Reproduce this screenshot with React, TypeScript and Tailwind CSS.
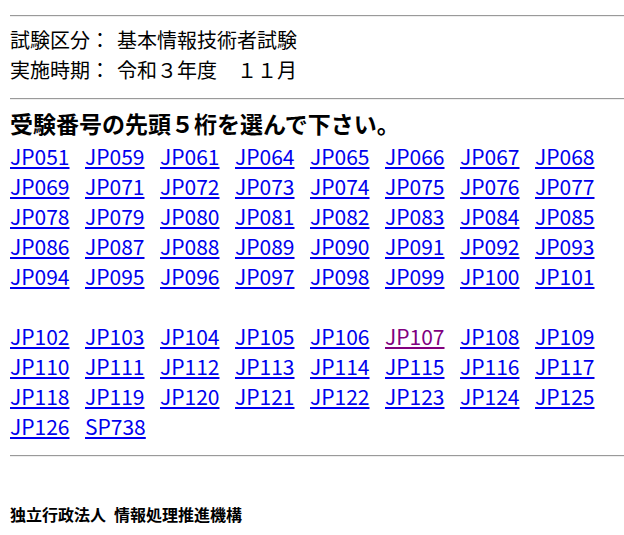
import React from "react";

const rows1 = [
  ["JP051", "JP059", "JP061", "JP064", "JP065", "JP066", "JP067", "JP068"],
  ["JP069", "JP071", "JP072", "JP073", "JP074", "JP075", "JP076", "JP077"],
  ["JP078", "JP079", "JP080", "JP081", "JP082", "JP083", "JP084", "JP085"],
  ["JP086", "JP087", "JP088", "JP089", "JP090", "JP091", "JP092", "JP093"],
  ["JP094", "JP095", "JP096", "JP097", "JP098", "JP099", "JP100", "JP101"],
];
const rows2 = [
  ["JP102", "JP103", "JP104", "JP105", "JP106", "JP107", "JP108", "JP109"],
  ["JP110", "JP111", "JP112", "JP113", "JP114", "JP115", "JP116", "JP117"],
  ["JP118", "JP119", "JP120", "JP121", "JP122", "JP123", "JP124", "JP125"],
  ["JP126", "SP738"],
];

function LinkRow({ items }: { items: string[] }) {
  return (
    <div className="flex h-[30px] items-center text-[21px]">
      {items.map((c) => (
        <div key={c} className="w-[75px] shrink-0">
          <a
            href="#"
            className={
              "underline underline-offset-[2px] " +
              (c === "JP107" ? "text-[#800080]" : "text-[#0000ee]")
            }
          >
            {c}
          </a>
        </div>
      ))}
    </div>
  );
}

function Hr() {
  return <div className="h-[2px] border-t border-t-[#9a9a9a] border-b border-b-[#eeeeee]" />;
}

export default function App() {
  return (
    <div
      className="bg-white w-[624px] h-[535px] overflow-hidden pl-[10px] pt-[15px] text-black text-[20px] leading-[30px]"
      style={{ fontFamily: '"Noto Sans CJK JP", "Liberation Sans", sans-serif' }}
    >
      <Hr />
      <div className="mt-[8px]">
        <div>
          試験区分：<span className="ml-[7px]">基本情報技術者試験</span>
        </div>
        <div>
          実施時期：<span className="ml-[7px]">令和３年度　１１月</span>
        </div>
      </div>
      <div className="mt-[13px]">
        <Hr />
      </div>
      <div className="mt-[8px] text-[23px] font-bold leading-[30px]">受験番号の先頭５桁を選んで下さい。</div>
      <div className="mt-[3px]">
        {rows1.map((r, i) => (
          <LinkRow key={i} items={r} />
        ))}
        <div className="h-[30px]" />
        {rows2.map((r, i) => (
          <LinkRow key={"b" + i} items={r} />
        ))}
      </div>
      <div className="mt-[14px]">
        <Hr />
      </div>
      <div className="mt-[47px] text-[16px] font-bold leading-[20px]">
        独立行政法人<span className="ml-[8px]">情報処理推進機構</span>
      </div>
    </div>
  );
}
